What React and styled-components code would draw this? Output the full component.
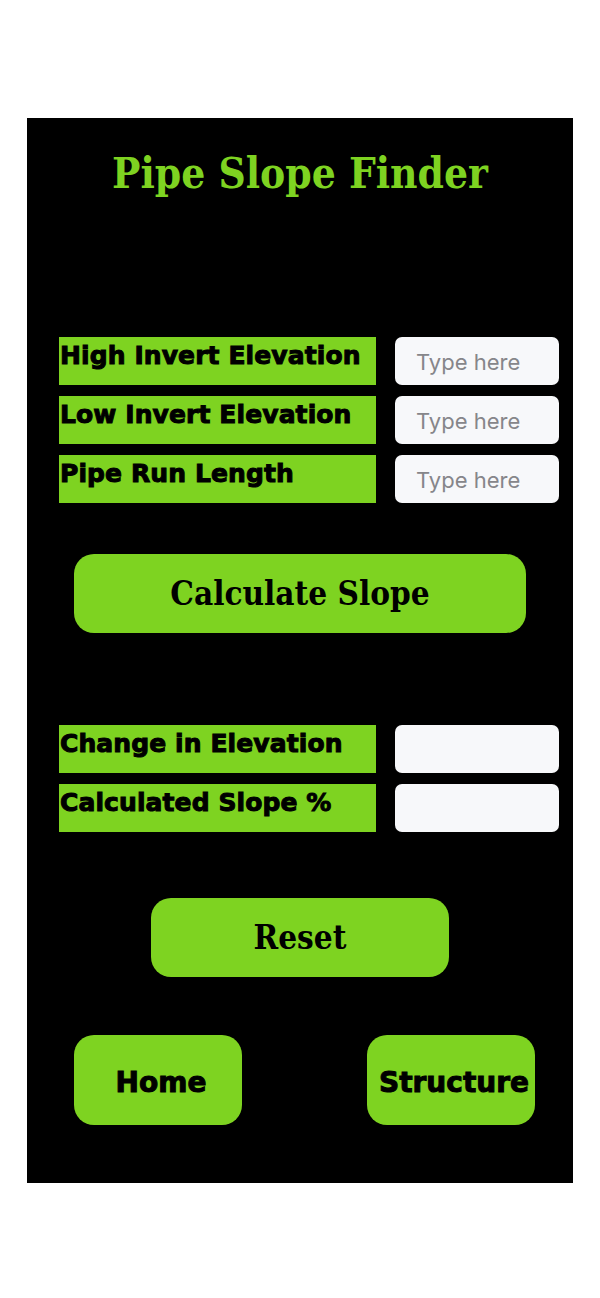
import React from "react";
import styled, { createGlobalStyle } from "styled-components";

const GREEN = "#7ed321";

const Global = createGlobalStyle`
  html, body { margin: 0; padding: 0; background: #ffffff; }
  * { box-sizing: border-box; }
`;

const Page = styled.div`
  width: 600px;
  height: 1298px;
  padding-top: 118px;
  padding-left: 27px;
`;

const Panel = styled.main`
  width: 546px;
  height: 1065px;
  background: #000;
  display: flex;
  flex-direction: column;
  align-items: center;
`;

const Title = styled.h1`
  margin: 28px 0 0;
  height: 56px;
  line-height: 56px;
  font-family: "DejaVu Serif", "Liberation Serif", serif;
  font-stretch: condensed;
  font-weight: 700;
  font-size: 42px;
  color: ${GREEN};
  text-align: center;
`;

const Group = styled.section`
  align-self: stretch;
  padding-left: 32px;
  margin-top: ${(p) => p.$top}px;
  display: flex;
  flex-direction: column;
  gap: 11px;
`;

const Row = styled.div`
  display: grid;
  grid-template-columns: 317px 164px;
  column-gap: 19px;
  align-items: center;
  height: 48px;
`;

const Label = styled.div`
  height: 48px;
  background: ${GREEN};
  padding: 3px 0 0 1px;
  font-family: "DejaVu Sans", "Liberation Sans", sans-serif;
  font-weight: 700;
  font-size: 25px;
  line-height: 31px;
  letter-spacing: 0.1px;
  -webkit-text-stroke: 1px #000;
  color: #000;
  white-space: nowrap;
`;

const Field = styled.input`
  width: 164px;
  height: 48px;
  border: none;
  outline: none;
  border-radius: 7px;
  background: #f7f8fa;
  padding: 2px 0 0 21px;
  font-family: Inter, "Liberation Sans", sans-serif;
  font-size: 22px;
  color: #222;
  &::placeholder { color: #86868a; }
`;

const BigButton = styled.button`
  margin-top: ${(p) => p.$top}px;
  width: ${(p) => p.$w}px;
  height: 79px;
  border: none;
  border-radius: 20px;
  background: ${GREEN};
  color: #000;
  font-family: "DejaVu Serif", "Liberation Serif", serif;
  font-stretch: condensed;
  font-weight: 700;
  font-size: 33px;
  padding: 0;
  cursor: pointer;
`;

const Nav = styled.nav`
  align-self: stretch;
  margin-top: 58px;
  padding: 0 38px 0 47px;
  display: flex;
  justify-content: space-between;
`;

const NavButton = styled.button`
  width: 168px;
  height: 90px;
  border: none;
  border-radius: 20px;
  background: ${GREEN};
  color: #000;
  font-family: "DejaVu Sans", "Liberation Sans", sans-serif;
  font-weight: 700;
  font-size: 28px;
  -webkit-text-stroke: 1px #000;
  padding: 4px 0 0 6px;
  white-space: nowrap;
  overflow: visible;
  cursor: pointer;
`;

const inputs = ["High Invert Elevation", "Low Invert Elevation", "Pipe Run Length"];
const outputs = ["Change in Elevation", "Calculated Slope %"];

export default function App() {
  return (
    <>
      <Global />
      <Page>
        <Panel>
          <Title>Pipe Slope Finder</Title>
          <Group $top={135}>
            {inputs.map((l) => (
              <Row key={l}>
                <Label>{l}</Label>
                <Field placeholder="Type here" />
              </Row>
            ))}
          </Group>
          <BigButton $top={51} $w={452}>Calculate Slope</BigButton>
          <Group $top={92}>
            {outputs.map((l) => (
              <Row key={l}>
                <Label>{l}</Label>
                <Field readOnly />
              </Row>
            ))}
          </Group>
          <BigButton $top={66} $w={298}>Reset</BigButton>
          <Nav>
            <NavButton>Home</NavButton>
            <NavButton>Structure</NavButton>
          </Nav>
        </Panel>
      </Page>
    </>
  );
}
